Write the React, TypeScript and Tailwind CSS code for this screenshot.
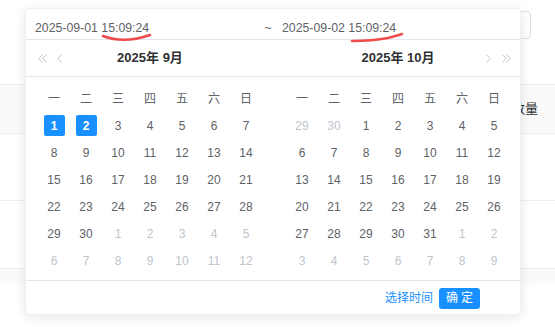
const FONT = { fontFamily: '"Liberation Sans", "Noto Sans CJK SC", sans-serif' };

const weekdays = ['一', '二', '三', '四', '五', '六', '日'];

type Day = { n: number; cur: boolean; sel?: boolean };

function build(prev: number[], count: number, next: number[], sel: number[] = []): Day[] {
  const out: Day[] = prev.map((n) => ({ n, cur: false }));
  for (let i = 1; i <= count; i++) out.push({ n: i, cur: true, sel: sel.includes(i) });
  next.forEach((n) => out.push({ n, cur: false }));
  return out;
}

const sept = build([], 30, [1, 2, 3, 4, 5, 6, 7, 8, 9, 10, 11, 12], [1, 2]);
const oct = build([29, 30], 31, [1, 2, 3, 4, 5, 6, 7, 8, 9]);

function Chevron({ dir }: { dir: 'l' | 'r' }) {
  return (
    <svg width="5" height="9" viewBox="0 0 5 9" fill="none" stroke="#c0c4cc" strokeWidth="1">
      <path d={dir === 'l' ? 'M4.5 0.5 L0.8 4.5 L4.5 8.5' : 'M0.5 0.5 L4.2 4.5 L0.5 8.5'} />
    </svg>
  );
}

function DoubleChevron({ dir }: { dir: 'l' | 'r' }) {
  return (
    <svg width="9" height="9" viewBox="0 0 9 9" fill="none" stroke="#c0c4cc" strokeWidth="1">
      {dir === 'l' ? (
        <>
          <path d="M4.5 0.5 L0.8 4.5 L4.5 8.5" />
          <path d="M8.5 0.5 L4.8 4.5 L8.5 8.5" />
        </>
      ) : (
        <>
          <path d="M0.5 0.5 L4.2 4.5 L0.5 8.5" />
          <path d="M4.5 0.5 L8.2 4.5 L4.5 8.5" />
        </>
      )}
    </svg>
  );
}

function Month({ title, days, side }: { title: string; days: Day[]; side: 'l' | 'r' }) {
  return (
    <div className="w-[248px]">
      <div className="relative h-[37px] border-b border-[#e4e7ed] flex items-center justify-center">
        {side === 'l' ? (
          <div className="absolute left-[12px] top-[14px] flex items-center gap-[10px]">
            <DoubleChevron dir="l" />
            <Chevron dir="l" />
          </div>
        ) : (
          <div className="absolute right-[11px] top-[14px] flex items-center gap-[11px]">
            <Chevron dir="r" />
            <DoubleChevron dir="r" />
          </div>
        )}
        <span className="text-[13px] font-bold text-[#303133]">{title}</span>
      </div>
      <div className="pt-[8px] pb-[6px] px-[12px]">
        <div className="grid grid-cols-[repeat(7,32px)] auto-rows-[27px] text-[12px]">
          {weekdays.map((w) => (
            <div key={w} className="flex items-center justify-center text-[#606266]">
              {w}
            </div>
          ))}
          {days.map((d, i) => (
            <div key={i} className="flex items-center justify-center">
              {d.sel ? (
                <span className="w-[21px] h-[21px] rounded-[2px] bg-[#1890ff] text-white font-bold flex items-center justify-center">
                  {d.n}
                </span>
              ) : (
                <span className={d.cur ? 'text-[#606266]' : 'text-[#c0c4cc]'}>{d.n}</span>
              )}
            </div>
          ))}
        </div>
      </div>
    </div>
  );
}

export default function App() {
  return (
    <div className="relative w-[555px] h-[327px] overflow-hidden bg-white" style={FONT}>
      {/* page behind the picker */}
      <div className="h-[84px] flex justify-end pt-[11px] pr-[24px]">
        <div className="w-[320px] h-[28px] border border-[#dcdfe6] rounded-[4px]" />
      </div>
      <div className="h-[50px] bg-[#fafafa] border-y border-[#ebeef5] flex items-center justify-end pr-[17px]">
        <span className="text-[13px] text-[#303133]">数量</span>
      </div>
      <div className="h-[67px] border-b border-[#ebeef5]" />
      <div className="h-[68px] border-b border-[#ebeef5]" />
      <div className="h-[15px] bg-[#fafafa]" />

      {/* picker popup */}
      <div className="absolute left-[25px] top-[8px] w-[496px] h-[307px] bg-white rounded-[4px] border border-[#eef0f3] shadow-[0_2px_12px_rgba(0,0,0,0.1)] overflow-hidden">
        <div className="h-[31px] border-b border-[#e4e7ed] flex items-center pt-[8px] pl-[9px] text-[12.3px] text-[#606266]">
          <span className="w-[228px]">2025-09-01 15:09:24</span>
          <span className="w-[10px] text-center">~</span>
          <span className="ml-[9px]">2025-09-02 15:09:24</span>
        </div>
        <div className="flex">
          <Month title="2025年 9月" days={sept} side="l" />
          <Month title="2025年 10月" days={oct} side="r" />
        </div>
        <div className="h-[35px] border-t border-[#e4e7ed] flex items-center justify-end pr-[40px] gap-[6px]">
          <span className="text-[12px] text-[#1890ff]">选择时间</span>
          <button className="w-[41px] h-[21px] rounded-[3px] bg-[#1890ff] text-white text-[12px] tracking-[3px] pl-[3px]">
            确定
          </button>
        </div>
      </div>

      {/* red hand-drawn marks */}
      <svg className="absolute left-0 top-0 pointer-events-none" width="555" height="327" fill="none">
        <path d="M103 36 Q 124 44 150 35" stroke="#f04b4b" strokeWidth="2.6" strokeLinecap="round" />
        <path d="M352 41 Q 372 41 388 38 Q 396 36 402 34" stroke="#f04b4b" strokeWidth="2.6" strokeLinecap="round" />
      </svg>
    </div>
  );
}
